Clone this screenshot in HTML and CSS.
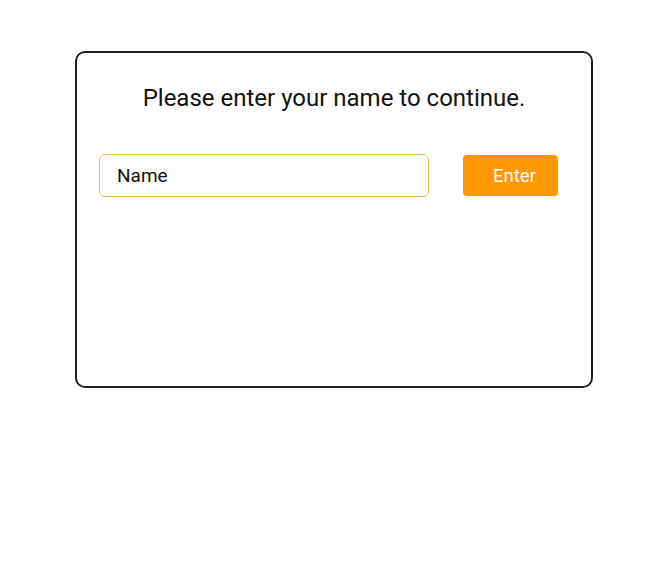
FILE: index.html
```html
<!DOCTYPE html>
<html>
<head>
<meta charset="utf-8">
<link rel="stylesheet" href="styles.css">
</head>
<body>
<div class="card">
  <h1 class="title">Please enter your name to continue.</h1>
  <div class="row">
    <div class="input">Name</div>
    <button class="btn">Enter</button>
  </div>
</div>
</body>
</html>
```
FILE: styles.css
```css
html, body {
  margin: 0;
  padding: 0;
  background: #fff;
  font-family: Roboto, "Liberation Sans", sans-serif;
}
body {
  padding-top: 51px;
}
.card {
  box-sizing: border-box;
  width: 518px;
  height: 337px;
  margin: 0 0 0 75px;
  border: 2px solid #222;
  border-radius: 10px;
  padding: 0 0 0 22px;
}
.title {
  margin: 30px 0 0 -22px;
  text-align: center;
  font-size: 24px;
  font-weight: 400;
  line-height: 30px;
  color: #111;
}
.row {
  display: flex;
  align-items: center;
  gap: 34px;
  margin-top: 41px;
}
.input {
  box-sizing: border-box;
  width: 330px;
  height: 43px;
  border: 1px solid #f3b94d;
  border-radius: 6px;
  padding-left: 17px;
  display: flex;
  align-items: center;
  font-size: 19px;
  color: #111;
}
.btn {
  width: 95px;
  height: 41px;
  border: none;
  border-radius: 4px;
  background: #ff9800;
  color: #fff;
  font-family: inherit;
  font-size: 18.5px;
  padding: 0 0 0 8px;
}
```
